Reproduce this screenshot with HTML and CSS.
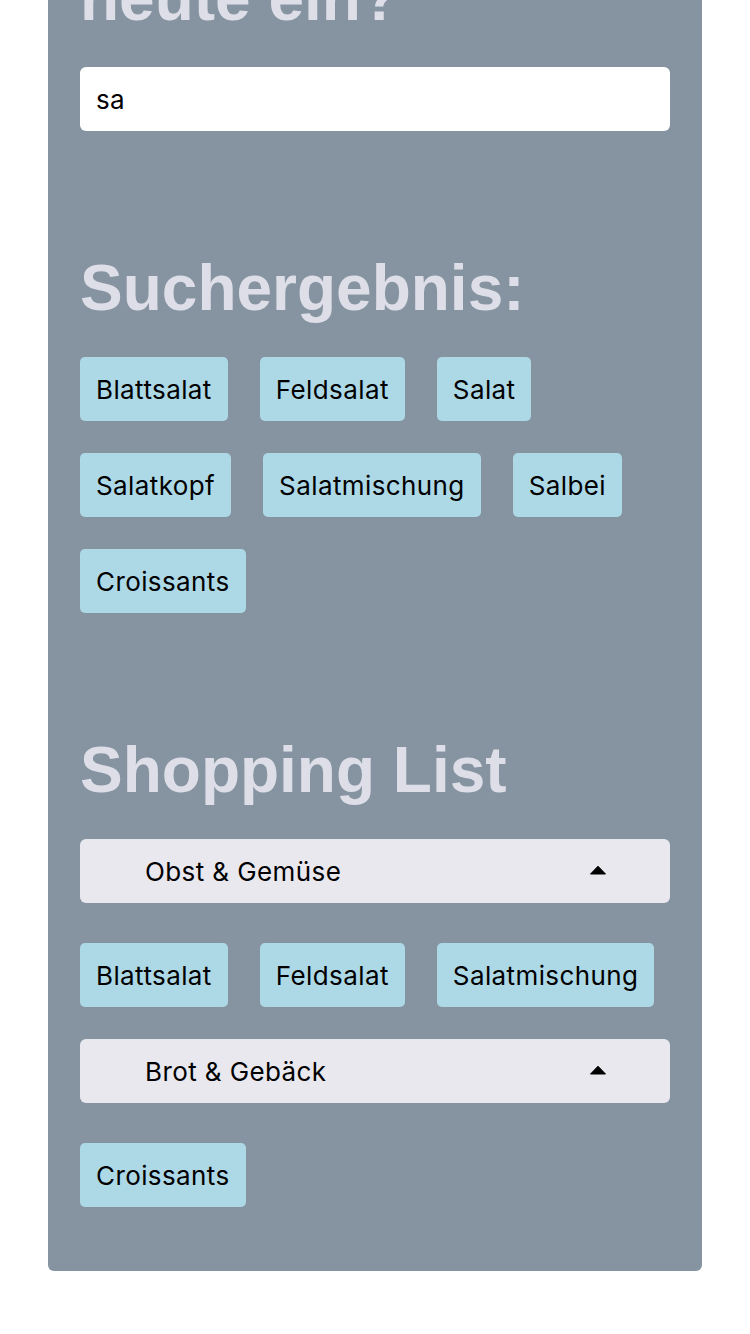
FILE: index.html
```html
<!DOCTYPE html>
<html lang="de">
<head>
<meta charset="utf-8">
<title>Shopping List</title>
<link rel="stylesheet" href="styles.css">
</head>
<body>
<main class="page">
  <div class="card">
    <h1 class="title">Was kaufst du heute ein?</h1>
    <div class="search"><input class="search-input" type="text" value="sa"></div>

    <section class="section">
      <h1 class="title">Suchergebnis:</h1>
      <div class="chips">
        <span class="chip">Blattsalat</span>
        <span class="chip">Feldsalat</span>
        <span class="chip">Salat</span>
        <span class="chip">Salatkopf</span>
        <span class="chip">Salatmischung</span>
        <span class="chip">Salbei</span>
        <span class="chip">Croissants</span>
      </div>
    </section>

    <section class="section">
      <h1 class="title">Shopping List</h1>
      <div class="category">
        <div class="category-head">
          <span>Obst &amp; Gemüse</span>
          <svg class="caret" width="18" height="10" viewBox="0 0 18 10"><path d="M9 1.2 L16.5 9 L1.5 9 Z" fill="#000" stroke="#000" stroke-width="1" stroke-linejoin="round"/></svg>
        </div>
        <div class="chips">
          <span class="chip">Blattsalat</span>
          <span class="chip">Feldsalat</span>
          <span class="chip">Salatmischung</span>
        </div>
      </div>
      <div class="category">
        <div class="category-head">
          <span>Brot &amp; Gebäck</span>
          <svg class="caret" width="18" height="10" viewBox="0 0 18 10"><path d="M9 1.2 L16.5 9 L1.5 9 Z" fill="#000" stroke="#000" stroke-width="1" stroke-linejoin="round"/></svg>
        </div>
        <div class="chips">
          <span class="chip">Croissants</span>
        </div>
      </div>
    </section>
  </div>
</main>
</body>
</html>
```

FILE: styles.css
```css
* { box-sizing: border-box; }
html, body { margin: 0; padding: 0; background: #ffffff; }
body { font-family: Inter, "Noto Sans", sans-serif; color: #000; }

.page {
  padding: 0 48px;
}

.card {
  margin-top: -113px;
  background: #8594a0;
  border-radius: 6px;
  padding: 0 32px 64px;
}

.title {
  margin: 0 0 32px;
  font-family: "Liberation Sans", Arial, sans-serif;
  font-weight: 700;
  font-size: 64px;
  line-height: 74px;
  color: #dedee8;
}

.search { display: flex; }
.search-input {
  width: 100%;
  height: 64px;
  border: 0;
  border-radius: 6px;
  background: #fff;
  padding: 0 16px;
  font-family: Inter, "Noto Sans", sans-serif;
  font-size: 26px;
  letter-spacing: 0.4px;
  color: #000;
  outline: none;
}

.section { margin-top: 120px; }

.chips {
  display: flex;
  flex-wrap: wrap;
  gap: 32px;
}

.chip {
  display: inline-block;
  background: #add8e6;
  border-radius: 5px;
  padding: 16px 16px;
  font-size: 26px;
  line-height: 33px;
  letter-spacing: 0.4px;
  color: #000;
  height: 64px;
}

.category { margin-bottom: 32px; }
.category:last-child { margin-bottom: 0; }

.category-head {
  display: flex;
  align-items: center;
  justify-content: space-between;
  height: 64px;
  background: #e8e8ee;
  border-radius: 6px;
  padding: 0 63px 0 65px;
  font-size: 26px;
  letter-spacing: 0.4px;
  margin-bottom: 40px;
}

.caret { display: block; margin-top: -2px; }
```
